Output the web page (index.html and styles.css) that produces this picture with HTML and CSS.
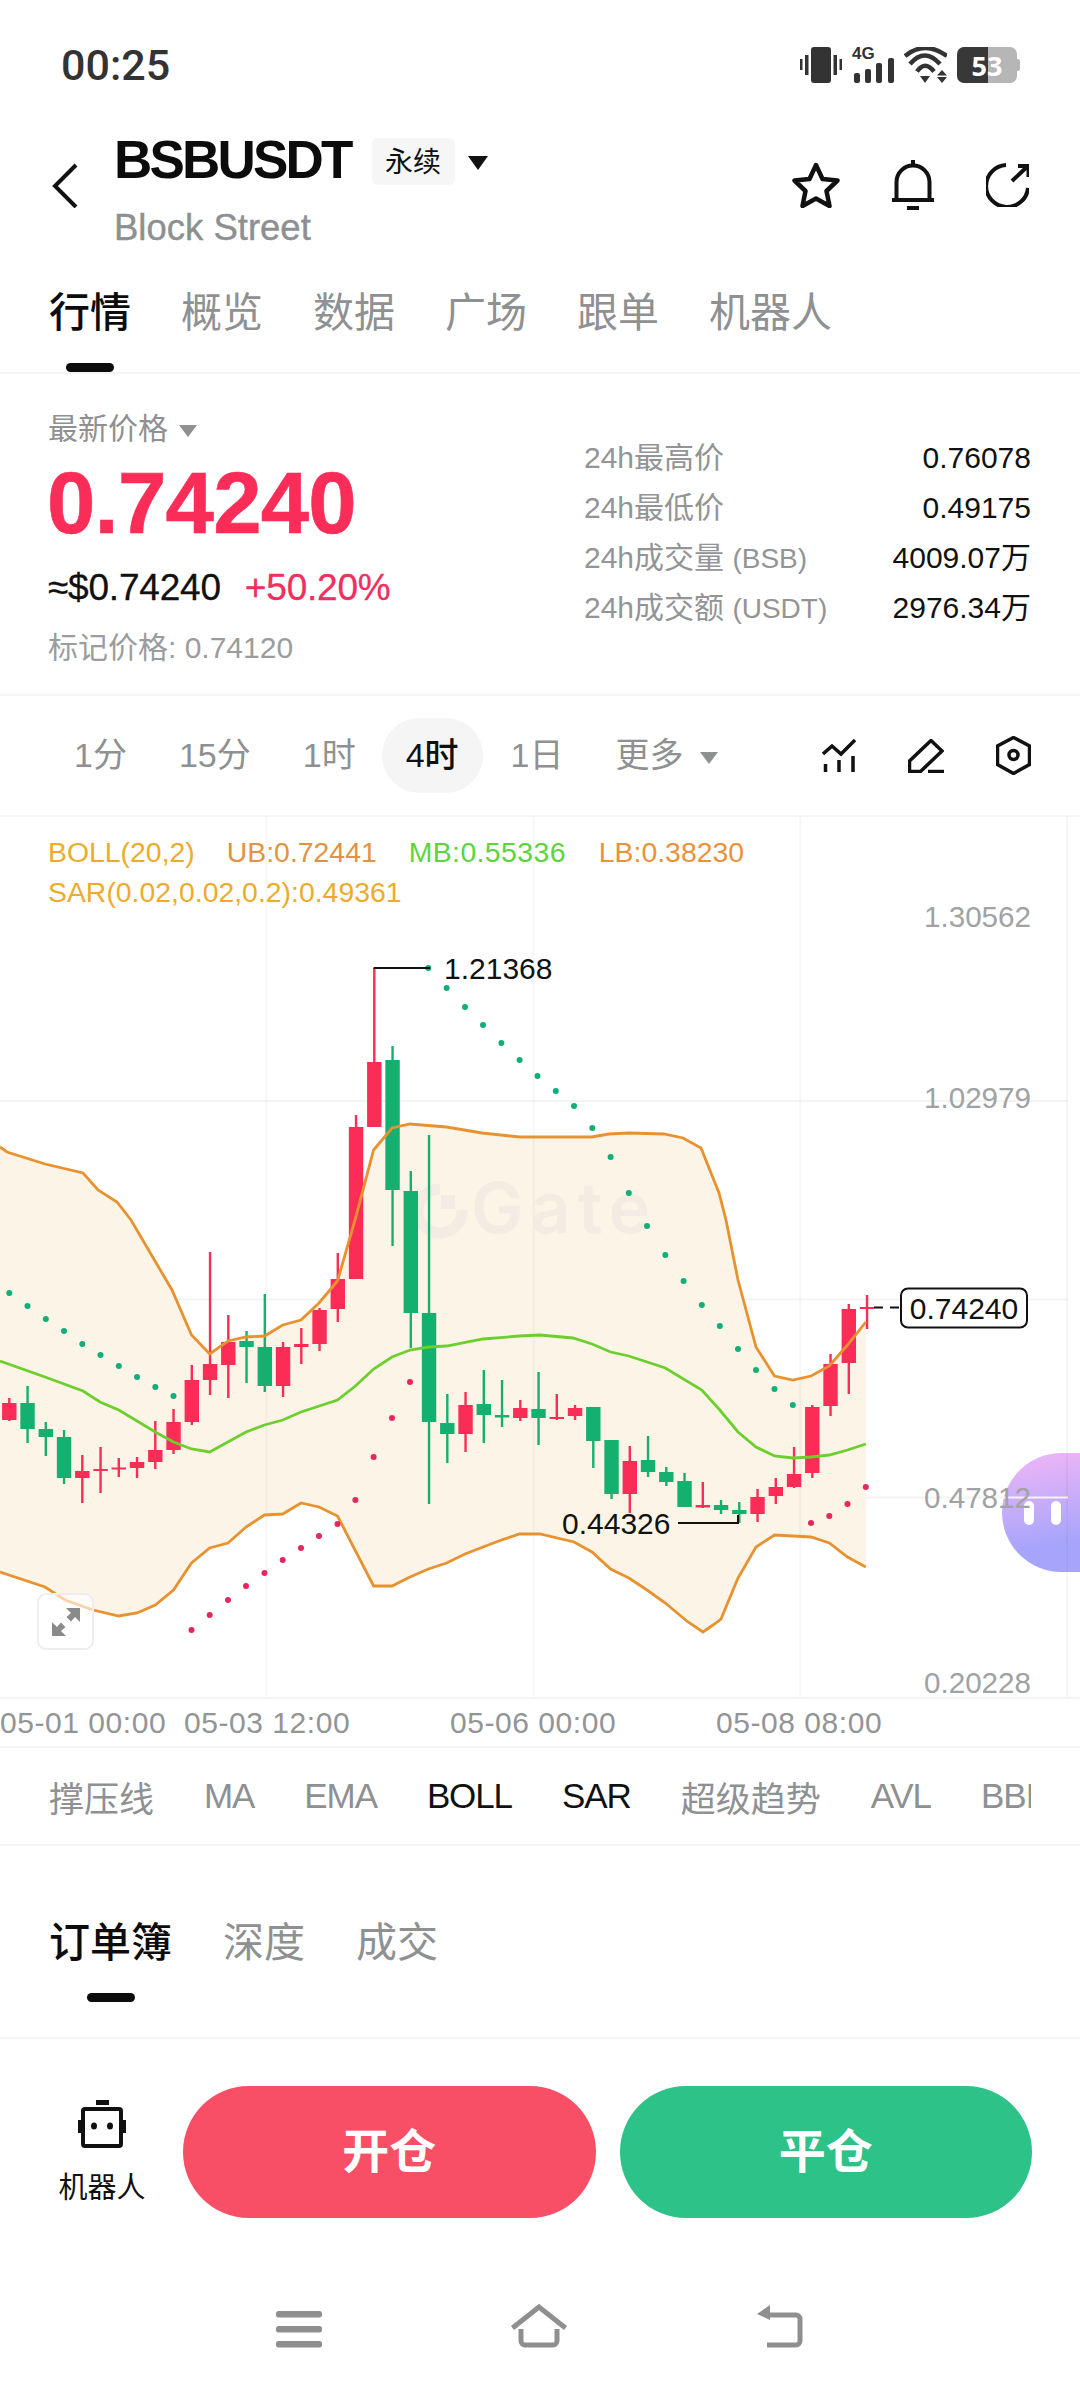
FILE: index.html
```html
<!doctype html>
<html lang="zh-CN">
  <head>
    <meta charset="UTF-8" />
    <meta name="viewport" content="width=device-width, initial-scale=1.0" />
    <title>BSBUSDT</title>
    <link rel="stylesheet" href="styles.css">
  </head>
  <body>
    <div class="status-bar">
      <span class="status-time">00:25</span>
      <div class="status-icons">
        <svg width="42" height="36" viewBox="0 0 42 36" fill="#333">
          <rect x="11" y="0" width="20" height="36" rx="3"></rect>
          <rect x="0" y="12" width="2.5" height="11"></rect>
          <rect x="5" y="8" width="3.5" height="20"></rect>
          <rect x="33.5" y="8" width="3.5" height="20"></rect>
          <rect x="39.5" y="12" width="2.5" height="11"></rect>
        </svg>
        <div class="signal">
          <span class="signal-type">4G</span>
          <svg width="42" height="25" viewBox="0 0 42 25" fill="#333">
            <rect x="2" y="15" width="6" height="10" rx="2"></rect>
            <rect x="13" y="11" width="6" height="14" rx="2"></rect>
            <rect x="24" y="5" width="6" height="20" rx="2"></rect>
            <rect x="36" y="0" width="6" height="25" rx="2"></rect>
          </svg>
        </div>
        <svg width="43" height="36" viewBox="0 0 43 36" fill="none" stroke="#333" stroke-width="4.5">
          <path d="M1 9Q21 -7 43 9"></path>
          <path d="M6 17Q20.5 0 36 17"></path>
          <path d="M13 24.5Q21 13 30 24.5"></path>
          <path d="M16 29H26L21 36Z" fill="#333" stroke="none"></path>
          <path d="M38 23L43 28.5H33Z M33 30H43L38 36Z" fill="#333" stroke="none"></path>
        </svg>
        <div class="battery">
          <span class="battery-level">53</span>
        </div>
      </div>
    </div>

    <header class="header">
      <svg class="back-icon" width="26" height="45" viewBox="0 0 26 45" fill="none" stroke="#111" stroke-width="4">
        <path d="M24 2L3 23L24 44"></path>
      </svg>
      <div class="pair">
        <div class="pair-row">
          <h1 class="pair-name">BSBUSDT</h1>
          <span class="pair-tag">永续</span>
          <span class="caret caret-dark"></span>
        </div>
        <div class="pair-sub">Block Street</div>
      </div>
      <div class="header-actions">
        <svg width="48" height="46" viewBox="0 0 48 46" fill="none" stroke="#111" stroke-width="4.5" stroke-linejoin="round">
          <path d="M24 3L30.5 17L45.5 18.5L34.5 29L37.5 44L24 36.5L10.5 44L13.5 29L2.5 18.5L17.5 17Z"></path>
        </svg>
        <svg width="42" height="50" viewBox="0 0 42 50" fill="none" stroke="#111" stroke-width="4">
          <path d="M21 0V6"></path>
          <path d="M4.5 40V22A16.5 16.5 0 0 1 37.5 22V40"></path>
          <path d="M0 40H42"></path>
          <rect x="15" y="46" width="12" height="4" fill="#111" stroke="none"></rect>
        </svg>
        <svg width="43" height="44" viewBox="0 0 43 44" fill="none" stroke="#111" stroke-width="4">
          <path d="M20 2A21 21 0 1 0 42 25"></path>
          <path d="M26 18L42 3"></path>
          <path d="M32 3H42.5V14"></path>
        </svg>
      </div>
    </header>

    <nav class="tabs main-tabs">
      <span class="tab active">行情</span>
      <span class="tab">概览</span>
      <span class="tab">数据</span>
      <span class="tab">广场</span>
      <span class="tab">跟单</span>
      <span class="tab">机器人</span>
    </nav>

    <section class="price-panel">
      <div class="price-left">
        <div class="price-label">最新价格 <span class="caret caret-grey"></span></div>
        <div class="price-big">0.74240</div>
        <div class="price-sub">
          <span>≈$0.74240</span>
          <span class="price-change">+50.20%</span>
        </div>
        <div class="price-mark">标记价格: 0.74120</div>
      </div>
      <div class="price-stats">
        <div class="stat-row"><span>24h最高价</span><b>0.76078</b></div>
        <div class="stat-row"><span>24h最低价</span><b>0.49175</b></div>
        <div class="stat-row"><span>24h成交量 <i class="stat-unit">(BSB)</i></span><b>4009.07万</b></div>
        <div class="stat-row"><span>24h成交额 <i class="stat-unit">(USDT)</i></span><b>2976.34万</b></div>
      </div>
    </section>

    <div class="timeframes">
      <span class="tf">1分</span>
      <span class="tf">15分</span>
      <span class="tf">1时</span>
      <span class="tf active">4时</span>
      <span class="tf">1日</span>
      <span class="tf">更多<span class="caret caret-grey tf-caret"></span></span>
      <div class="tf-tools">
        <svg width="34" height="33" viewBox="0 0 34 33" fill="none" stroke="#111" stroke-width="3.5">
          <path d="M1 15L10 7L19 15L33 1"></path>
          <path d="M3.5 25V33M17 21V33M31 17V33"></path>
        </svg>
        <svg width="36" height="34" viewBox="0 0 36 34" fill="none" stroke="#111" stroke-width="3.5">
          <path d="M23 1.5L34 12L12.5 32.5H1.5V22Z"></path>
          <path d="M20 32.5H36"></path>
        </svg>
        <svg width="35" height="39" viewBox="0 0 35 39" fill="none" stroke="#111" stroke-width="3.5">
          <path d="M17.5 1.5L33.5 10V28.5L17.5 37.5L1.5 28.5V10Z"></path>
          <circle cx="17.5" cy="19" r="4.5"></circle>
        </svg>
      </div>
    </div>

    <section class="chart">
      <div class="bubble">
        <span class="bubble-eye"></span>
        <span class="bubble-eye"></span>
      </div>
      <svg id="chart-svg" class="chart-svg" viewBox="0 817 1080 880"></svg>
      <div class="legend">
        <div class="legend-row">
          <span class="c-boll">BOLL(20,2)</span>
          <span class="c-ub">UB:0.72441</span>
          <span class="c-mb">MB:0.55336</span>
          <span class="c-lb">LB:0.38230</span>
        </div>
        <div class="legend-row">
          <span class="c-boll">SAR(0.02,0.02,0.2):0.49361</span>
        </div>
      </div>
      <div class="expand-btn">
        <svg width="30" height="30" viewBox="0 0 30 30" fill="#8a8a8a">
          <path d="M29 1V15L24 10L20 14.5L15.5 10L20 6L15 1Z"></path>
          <path d="M1 29V15L6 20L10 15.5L14.5 20L10 24L15 29Z"></path>
        </svg>
      </div>
    </section>

    <div class="time-axis">
      <span>05-01 00:00</span>
      <span>05-03 12:00</span>
      <span>05-06 00:00</span>
      <span>05-08 08:00</span>
    </div>

    <div class="indicators">
      <div class="indicator-list">
        <span>撑压线</span>
        <span class="latin">MA</span>
        <span class="latin">EMA</span>
        <span class="latin on">BOLL</span>
        <span class="latin on">SAR</span>
        <span>超级趋势</span>
        <span class="latin">AVL</span>
        <span class="latin">BBI</span>
      </div>
    </div>

    <nav class="tabs book-tabs">
      <span class="tab active">订单簿</span>
      <span class="tab">深度</span>
      <span class="tab">成交</span>
    </nav>

    <div class="action-bar">
      <div class="robot">
        <svg width="52" height="48" viewBox="0 0 52 48" fill="#111">
          <rect x="20" y="0" width="13" height="5"></rect>
          <rect x="7" y="9" width="38" height="37" rx="2" fill="none" stroke="#111" stroke-width="4"></rect>
          <rect x="2" y="20" width="3" height="13"></rect>
          <rect x="47" y="20" width="3" height="13"></rect>
          <ellipse cx="18" cy="26" rx="3" ry="3.5"></ellipse>
          <ellipse cx="34" cy="26" rx="3" ry="3.5"></ellipse>
        </svg>
        <span>机器人</span>
      </div>
      <div class="trade-btn open">开仓</div>
      <div class="trade-btn close">平仓</div>
    </div>

    <div class="nav-bar">
      <svg width="46" height="44" viewBox="0 0 46 44" fill="#8f8f8f">
        <rect x="0" y="7" width="46" height="6.5" rx="2.5"></rect>
        <rect x="0" y="22" width="46" height="6.5" rx="2.5"></rect>
        <rect x="0" y="37" width="46" height="6.5" rx="2.5"></rect>
      </svg>
      <svg width="58" height="44" viewBox="0 0 58 44" fill="none" stroke="#8f8f8f" stroke-width="5">
        <path d="M2.5 24L29 3L55.5 24"></path>
        <path d="M11 25V37A4 4 0 0 0 15 41H43A4 4 0 0 0 47 37V25"></path>
      </svg>
      <svg width="48" height="44" viewBox="0 0 48 44" fill="none" stroke="#8f8f8f" stroke-width="5">
        <path d="M10 11H40A4 4 0 0 1 44 15V37A4 4 0 0 1 40 41H11"></path>
        <path d="M14 1V16L1 10Z" fill="#8f8f8f" stroke="none"></path>
      </svg>
    </div>

    <script src="chart.js"></script>
  </body>
</html>
```

FILE: styles.css
```css
* {
  margin: 0;
  padding: 0;
  box-sizing: border-box;
}

body {
  font-family: "Liberation Sans", "Noto Sans CJK SC", sans-serif;
  background: white;
  width: 1080px;
  height: 2392px;
  overflow: hidden;
  color: #111;
}

svg {
  display: block;
  flex: none;
}

/* status bar */
.status-bar {
  height: 130px;
  display: flex;
  align-items: center;
  justify-content: space-between;
  padding: 0 60px 0 61px;
}

.status-time {
  font-family: Roboto, sans-serif;
  font-size: 43px;
  font-weight: 500;
  color: #333;
}

.status-icons {
  display: flex;
  align-items: center;
  gap: 10px;
}

.signal {
  width: 42px;
  height: 36px;
  display: flex;
  flex-direction: column;
  justify-content: space-between;
}

.signal-type {
  font-size: 17px;
  line-height: 13px;
  font-weight: 700;
  color: #333;
}

.signal svg {
  margin-top: -6px;
}

.battery {
  width: 60px;
  height: 36px;
  margin-right: 3px;
  border-radius: 7px;
  background: linear-gradient(90deg, #383838 0 31px, #b6b6b6 31px);
  position: relative;
  display: flex;
  align-items: center;
  justify-content: center;
}

.battery::after {
  content: "";
  position: absolute;
  right: -3px;
  top: 12px;
  width: 3px;
  height: 12px;
  border-radius: 0 2px 2px 0;
  background: #b6b6b6;
}

.battery-level {
  font-family: "Open Sans", sans-serif;
  font-size: 27px;
  font-weight: 700;
  color: white;
}

/* header */
.header {
  height: 134px;
  display: flex;
  padding: 0 51px 0 52px;
}

.back-icon {
  margin-top: 33px;
  margin-right: 36px;
}

.pair-row {
  height: 58px;
  display: flex;
  align-items: center;
}

.pair-name {
  font-size: 53px;
  font-weight: 700;
  letter-spacing: -2.8px;
  color: #0c0c0c;
}

.pair-tag {
  width: 83px;
  height: 47px;
  margin-left: 21px;
  margin-top: 5px;
  border-radius: 6px;
  background: #f6f6f6;
  font-size: 28px;
  line-height: 49px;
  text-align: center;
}

.pair-sub {
  margin-top: 20px;
  font-size: 36.5px;
  line-height: 40px;
  font-weight: 400;
  color: #8d8f91;
  -webkit-text-stroke: 0.4px #8d8f91;
}

.header-actions {
  margin-left: auto;
  height: 50px;
  margin-top: 30px;
  display: flex;
  align-items: center;
  gap: 52px;
}

.caret {
  display: inline-block;
  border-style: solid;
  border-color: transparent;
  border-bottom-width: 0;
}

.caret-dark {
  margin-left: 13px;
  margin-top: 8px;
  border-width: 14px 10.5px 0;
  border-top-color: #111;
}

.caret-grey {
  margin-left: 3px;
  border-width: 12px 9px 0;
  border-top-color: #8e9092;
  vertical-align: middle;
}

/* tabs, used twice */
.tabs {
  display: flex;
  gap: 50px;
  padding: 21px 49px 0;
  border-bottom: 2px solid #f4f4f4;
}

.main-tabs {
  height: 110px;
}

.book-tabs {
  height: 193px;
  gap: 51px;
  padding-top: 69px;
}

.tab {
  position: relative;
  font-size: 41px;
  line-height: 56px;
  height: 87px;
  color: #8e9092;
}

.tab.active {
  color: #0c0c0c;
  font-weight: 500;
}

.tab.active::after {
  content: "";
  position: absolute;
  left: 50%;
  bottom: 0;
  width: 48px;
  height: 9px;
  margin-left: -24px;
  border-radius: 5px;
  background: #0c0c0c;
}

/* price panel */
.price-panel {
  height: 322px;
  display: flex;
  justify-content: space-between;
  padding: 35px 49px 0 48px;
  border-bottom: 2px solid #f4f4f4;
}

.price-label {
  font-size: 30px;
  line-height: 40px;
  color: #8e9092;
}

.price-big {
  margin-top: 9px;
  margin-left: -1px;
  font-size: 87px;
  line-height: 90px;
  font-weight: 700;
  letter-spacing: -0.8px;
  color: #f92d58;
  -webkit-text-stroke: 0.6px #f92d58;
}

.price-sub {
  margin-top: 18px;
  display: flex;
  gap: 24px;
  font-size: 37px;
  line-height: 44px;
  letter-spacing: -0.2px;
  -webkit-text-stroke: 0.3px currentColor;
}

.price-change {
  color: #ef2f5f;
}

.price-mark {
  margin-top: 18px;
  font-size: 30px;
  line-height: 40px;
  color: #9a9c9e;
}

.price-stats {
  width: 447px;
  margin-top: 24px;
}

.stat-row {
  height: 50px;
  display: flex;
  align-items: baseline;
  justify-content: space-between;
  line-height: 50px;
  font-size: 30px;
  color: #929496;
}

.stat-row b {
  font-weight: 400;
  color: #111;
}

.stat-unit {
  font-style: normal;
  font-size: 28px;
}

/* timeframe row */
.timeframes {
  height: 121px;
  display: flex;
  align-items: center;
  padding: 0 49px 0 48px;
  border-bottom: 2px solid #f4f4f4;
  font-size: 34px;
  color: #8e9092;
}

.tf {
  height: 75px;
  line-height: 75px;
  padding: 0 26px;
  border-radius: 38px;
}

.tf.active {
  padding: 0 24px;
  margin: 0 2px 0 0;
  background: #f5f5f5;
  color: #111;
  font-weight: 500;
}

.tf-caret {
  margin-left: 16px;
}

.tf-tools {
  margin-left: auto;
  display: flex;
  align-items: center;
  gap: 52px;
}

/* chart */
.chart {
  position: relative;
  height: 880px;
}

.chart-svg {
  position: absolute;
  left: 0;
  top: 0;
  width: 1080px;
  height: 880px;
  overflow: visible;
  font-family: "Liberation Sans", sans-serif;
}

.legend {
  position: relative;
  padding: 15px 0 0 48px;
  font-size: 28.4px;
  line-height: 40px;
}

.legend-row {
  display: flex;
  gap: 32px;
}

.c-boll {
  color: #eeab2b;
}

.c-ub {
  color: #e2933f;
}

.c-mb {
  color: #5ed43c;
  letter-spacing: 0.4px;
}

.c-lb {
  margin-left: 1px;
  color: #e9923a;
}

.bubble {
  position: absolute;
  right: 0;
  top: 636px;
  width: 78px;
  height: 119px;
  border-radius: 60px 0 0 60px;
  background: linear-gradient(170deg, #f2b6f7 0%, #a7a5fb 75%);
  display: flex;
  align-items: center;
  gap: 17px;
  padding-left: 22px;
}

.bubble-eye {
  width: 10px;
  height: 24px;
  border-radius: 5px;
  background: white;
}

.expand-btn {
  position: absolute;
  left: 37px;
  top: 776px;
  width: 57px;
  height: 57px;
  border: 2px solid #eeeeee;
  border-radius: 9px;
  background: rgba(255, 255, 255, 0.6);
  display: flex;
  align-items: center;
  justify-content: center;
}

/* below the chart */
.time-axis {
  height: 51px;
  display: grid;
  grid-template-columns: 184px 266px 266px auto;
  align-items: center;
  border-top: 2px solid #f4f4f4;
  border-bottom: 2px solid #f4f4f4;
  font-size: 30px;
  letter-spacing: 0.55px;
  color: #929496;
  white-space: nowrap;
}

.indicators {
  height: 98px;
  padding: 0 49px;
  border-bottom: 2px solid #f4f4f4;
}

.indicator-list {
  height: 100%;
  display: flex;
  align-items: center;
  gap: 50px;
  overflow: hidden;
  font-size: 35px;
  color: #8e9092;
  white-space: nowrap;
}

.indicator-list .latin {
  letter-spacing: -1.1px;
}

.indicator-list .on {
  color: #111;
}

/* bottom actions */
.action-bar {
  height: 221px;
  display: flex;
  padding: 47px 48px 0;
  gap: 24px;
}

.robot {
  width: 108px;
  margin-right: 3px;
  padding-top: 14px;
  display: flex;
  flex-direction: column;
  align-items: center;
  font-size: 29px;
  line-height: 40px;
}

.robot svg {
  margin-bottom: 20px;
}

.trade-btn {
  flex: 1;
  height: 132px;
  border-radius: 66px;
  font-size: 47px;
  line-height: 132px;
  font-weight: 700;
  text-align: center;
  color: white;
}

.trade-btn.open {
  background: #f94f66;
}

.trade-btn.close {
  background: #2cc288;
}

.nav-bar {
  height: 132px;
  padding-top: 44px;
  display: flex;
  justify-content: center;
  gap: 188px;
}
```

FILE: chart.js
```js
// x of candle i, all y values are page coordinates
const STEP = 18.25;
const xOf = (i) => 9.3 + STEP * i;

const RED = "#fb2c55";
const GREEN = "#14b06f";

// color, high, top, bottom, low
const candles = [
  ["r", 1398, 1403, 1420, 1421], ["g", 1386, 1403, 1429, 1443], ["g", 1422, 1429, 1437, 1456], ["g", 1430, 1437, 1478, 1484],
  ["r", 1455, 1471, 1478, 1503], ["r", 1447, 1469, 1470.5, 1493], ["r", 1458, 1467.5, 1469.5, 1477], ["r", 1457, 1462, 1468, 1478],
  ["r", 1421, 1450, 1462, 1469], ["r", 1409, 1422, 1450, 1454], ["r", 1365, 1380, 1422, 1425], ["r", 1252, 1364, 1380, 1395],
  ["r", 1315, 1342, 1365, 1398], ["g", 1331, 1341, 1347, 1383], ["g", 1294, 1347, 1386, 1392], ["r", 1342, 1347, 1386, 1397],
  ["r", 1328, 1344, 1347, 1364], ["r", 1308, 1310, 1344, 1351], ["r", 1253, 1279, 1309, 1322], ["r", 1115, 1127, 1279, 1279],
  ["r", 968, 1062, 1127, 1127], ["g", 1046, 1060, 1190, 1246], ["g", 1171, 1191, 1313, 1348], ["g", 1135, 1313, 1422, 1504],
  ["g", 1394, 1423, 1434, 1463], ["r", 1392, 1405, 1434, 1452], ["g", 1370, 1404, 1415, 1443], ["g", 1380, 1415, 1417.5, 1427],
  ["r", 1400, 1408, 1418, 1421], ["g", 1372, 1409, 1418, 1445], ["r", 1394, 1417, 1418, 1420], ["r", 1405, 1408, 1416, 1420],
  ["g", 1407, 1407, 1441, 1468], ["g", 1440, 1440, 1494, 1499], ["r", 1446, 1461, 1494, 1513], ["g", 1436, 1460, 1472, 1477],
  ["g", 1467, 1472, 1482, 1486], ["g", 1473, 1481, 1507, 1507], ["r", 1482, 1505, 1507.5, 1508], ["g", 1500, 1505, 1510, 1514],
  ["g", 1502, 1510, 1514, 1523], ["r", 1489, 1497, 1514, 1522], ["r", 1478, 1487, 1496, 1504], ["r", 1447, 1474, 1487, 1488],
  ["r", 1405, 1407, 1473, 1478], ["r", 1354, 1364, 1406, 1416], ["r", 1304, 1309, 1363, 1394], ["r", 1295, 1307, 1309, 1329],
];

const upper = [
  [0, 1147], [7, 1152], [45, 1164], [83, 1173], [98, 1190], [117, 1202], [131, 1220], [172, 1290], [191.5, 1335],
  [209.7, 1354], [228, 1341], [246, 1337], [264.5, 1336], [282.7, 1325], [301, 1320], [319, 1303], [337.5, 1281],
  [355, 1220], [373.6, 1150], [392, 1128], [410, 1124], [446.6, 1127], [482, 1133], [519.6, 1137], [591.7, 1137],
  [609, 1134], [628.8, 1133], [664, 1134], [683, 1138], [701, 1148], [719, 1193], [726, 1220], [738, 1280],
  [756, 1347], [774.5, 1376], [792.8, 1380], [811, 1376], [829.3, 1366], [847.5, 1345], [865.8, 1322],
];

const lower = [
  [0, 1572], [45, 1587], [65, 1600], [93, 1610], [118.8, 1616], [137, 1613], [155.3, 1605], [173.5, 1590],
  [191.5, 1563], [209.7, 1548], [228, 1543], [246, 1527], [264.5, 1515], [282.7, 1514], [301, 1503], [319, 1507],
  [337.5, 1516], [373.6, 1586], [392, 1586], [410, 1577], [428.4, 1569], [446.6, 1563], [465, 1554], [483, 1547],
  [501.4, 1540], [519.6, 1534], [540, 1534], [574, 1542], [592, 1552], [610.6, 1569], [628.8, 1578], [647, 1590],
  [665.3, 1603], [688, 1622], [703, 1632], [713, 1625], [721, 1619], [738, 1578], [756, 1547], [774.5, 1535],
  [811, 1537], [829.3, 1543], [847.5, 1557], [865.8, 1567],
];

const middle = [
  [0, 1361], [45, 1377], [83, 1391], [100, 1402], [118.8, 1410], [155.3, 1432], [173.5, 1442], [191.5, 1449],
  [209.7, 1452], [246, 1432], [264.5, 1425], [282.7, 1420], [301, 1412], [337.5, 1400], [355.4, 1386], [373.6, 1369],
  [392, 1357], [410, 1350], [428.4, 1347], [446.6, 1346], [483, 1339], [519.6, 1336], [540, 1335], [573, 1338],
  [592, 1344], [610.6, 1352], [628.8, 1356], [665.3, 1368], [701.8, 1390], [719.8, 1410], [738, 1432], [756, 1447],
  [774.5, 1456], [792.8, 1458], [811, 1457], [829.3, 1455], [847.5, 1450], [865.8, 1444],
];

const sarGreen = [
  [9.3, 1293], [27.5, 1306], [45.8, 1319], [64, 1331], [82.3, 1344], [100.5, 1355], [118.8, 1366], [137, 1377],
  [155.3, 1387], [173.5, 1396], [428.4, 968], [446.6, 988], [465, 1007], [483, 1025], [501.4, 1043], [519.6, 1060],
  [537.5, 1076], [555.8, 1091], [574, 1106], [592.3, 1128], [610.6, 1157], [628.8, 1193], [647, 1226], [665.3, 1255],
  [683.6, 1281], [701.8, 1305], [719.8, 1326], [738, 1349], [756, 1370], [774.5, 1389], [792.8, 1405],
];

const sarRed = [
  [191.5, 1630], [209.7, 1615], [228, 1600], [246, 1586], [264.5, 1573], [282.7, 1560], [301, 1548], [319, 1536],
  [337.5, 1524], [355.4, 1500], [373.6, 1457], [392, 1418], [410, 1382], [811, 1523], [829.3, 1516], [847.5, 1504],
  [865.8, 1487],
];

const pts = (list) => list.map((p) => p.join(",")).join(" ");

let out = "";

// grid
[1101, 1299.5, 1497.5].forEach((y) => {
  out += `<path d="M0 ${y}H1068" stroke="#f3f3f3" stroke-width="2"/>`;
});

// band fill
out += `<polygon points="${pts(upper)} ${pts([...lower].reverse())}" fill="#fdf4e8"/>`;

[266.5, 533.7, 800.3, 1067].forEach((x) => {
  out += `<path d="M${x} 817V1697" stroke="#000" stroke-opacity="0.035" stroke-width="2"/>`;
});

// watermark
out += `<g fill="none" stroke="#f3ece2" stroke-width="11">
  <path d="M440 1189A22 22 0 1 0 462 1210"/>
  <rect x="441" y="1195" width="14" height="14" fill="#f3ece2" stroke="none"/>
</g>`;
out += `<text x="471" y="1233" font-size="70" font-weight="600" letter-spacing="7" font-family="Inter, sans-serif" fill="#f3ece2">Gate</text>`;

// candles
candles.forEach((c, i) => {
  const x = xOf(i);
  const color = c[0] === "r" ? RED : GREEN;
  out += `<rect x="${x - 1.2}" y="${c[1]}" width="2.4" height="${c[4] - c[1]}" fill="${color}"/>`;
  out += `<rect x="${x - 7.2}" y="${c[2]}" width="14.4" height="${Math.max(c[3] - c[2], 2)}" fill="${color}"/>`;
});

// bands
out += `<polyline points="${pts(upper)}" fill="none" stroke="#e8922f" stroke-width="2.8"/>`;
out += `<polyline points="${pts(lower)}" fill="none" stroke="#e8922f" stroke-width="2.8"/>`;
out += `<polyline points="${pts(middle)}" fill="none" stroke="#6ccf2d" stroke-width="2.8"/>`;

// SAR dots
sarGreen.forEach((p) => {
  out += `<circle cx="${p[0]}" cy="${p[1]}" r="3" fill="#10ae78"/>`;
});
sarRed.forEach((p) => {
  out += `<circle cx="${p[0]}" cy="${p[1]}" r="3" fill="#e8265e"/>`;
});

// high, low and last price marks
out += `<path d="M373.6 968H430" stroke="#111" stroke-width="2" fill="none"/>`;
out += `<text x="444" y="979" font-size="30" fill="#111">1.21368</text>`;
out += `<path d="M678 1523H738V1515" stroke="#111" stroke-width="2" fill="none"/>`;
out += `<text x="562" y="1534" font-size="30" fill="#111">0.44326</text>`;
out += `<path d="M874 1307.5H900" stroke="#111" stroke-width="2" stroke-dasharray="9 7" fill="none"/>`;
out += `<rect x="901" y="1288.5" width="126" height="39" rx="7" fill="#fff" stroke="#111" stroke-width="2"/>`;
out += `<text x="964" y="1319" font-size="30" text-anchor="middle" fill="#111">0.74240</text>`;

// price axis
[["1.30562", 927], ["1.02979", 1108], ["0.47812", 1508], ["0.20228", 1693]].forEach((l) => {
  out += `<text x="1031" y="${l[1]}" font-size="29.6" text-anchor="end" fill="#a0a2a4">${l[0]}</text>`;
});

document.getElementById("chart-svg").innerHTML = out;
```
